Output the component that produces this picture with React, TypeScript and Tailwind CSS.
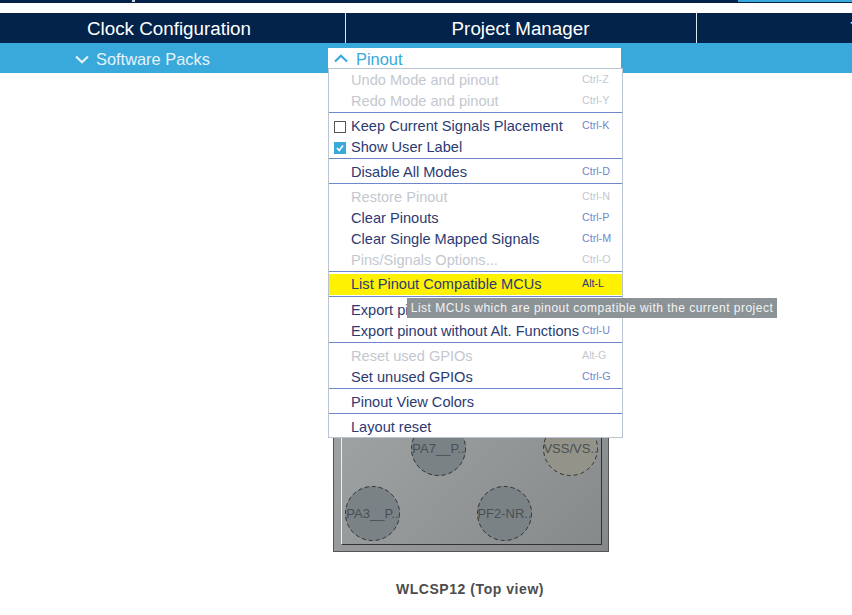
type Item = { label: string; key?: string; off?: boolean; box?: 'empty' | 'checked'; hot?: boolean };

const groups: Item[][] = [
  [
    { label: 'Undo Mode and pinout', key: 'Ctrl-Z', off: true },
    { label: 'Redo Mode and pinout', key: 'Ctrl-Y', off: true },
  ],
  [
    { label: 'Keep Current Signals Placement', key: 'Ctrl-K', box: 'empty' },
    { label: 'Show User Label', box: 'checked' },
  ],
  [{ label: 'Disable All Modes', key: 'Ctrl-D' }],
  [
    { label: 'Restore Pinout', key: 'Ctrl-N', off: true },
    { label: 'Clear Pinouts', key: 'Ctrl-P' },
    { label: 'Clear Single Mapped Signals', key: 'Ctrl-M' },
    { label: 'Pins/Signals Options...', key: 'Ctrl-O', off: true },
  ],
  [{ label: 'List Pinout Compatible MCUs', key: 'Alt-L', hot: true }],
  [
    { label: 'Export pinout with Alt. Functions', key: 'Ctrl-E' },
    { label: 'Export pinout without Alt. Functions', key: 'Ctrl-U' },
  ],
  [
    { label: 'Reset used GPIOs', key: 'Alt-G', off: true },
    { label: 'Set unused GPIOs', key: 'Ctrl-G' },
  ],
  [{ label: 'Pinout View Colors' }],
  [{ label: 'Layout reset' }],
];

function Caret({ up }: { up?: boolean }) {
  return (
    <svg width="14" height="9" viewBox="0 0 14 9" fill="none" stroke="currentColor" strokeWidth="2.2">
      <path d={up ? 'M1 7.5 L7 1.8 L13 7.5' : 'M1 1.5 L7 7.2 L13 1.5'} />
    </svg>
  );
}

function Row({ item }: { item: Item }) {
  return (
    <div className={`flex h-[21px] pl-[5px] ${item.hot ? 'bg-[#fff200]' : ''}`}>
      <div className="flex w-[17px] shrink-0 items-center">
        {item.box === 'empty' && <span className="h-[12px] w-[12px] border border-[#555]" />}
        {item.box === 'checked' && (
          <span className="flex h-[12px] w-[12px] items-center justify-center bg-[#39a9dc]">
            <svg width="10" height="10" viewBox="0 0 10 10" fill="none" stroke="#fff" strokeWidth="1.6">
              <path d="M2 5 L4.2 7.4 L8 2.5" />
            </svg>
          </span>
        )}
      </div>
      <div
        className={`flex w-[231px] shrink-0 items-center text-[14.6px] whitespace-nowrap ${item.hot ? 'pt-[1px]' : ''} ${
          item.off ? 'text-[#c3c8d0]' : 'text-[#2b3a72]'
        }`}
      >
        {item.label}
      </div>
      {item.key && (
        <div className={`pt-[2px] text-[10.7px] leading-[14px] ${item.off ? 'text-[#c3c8d0]' : item.hot ? 'text-[#2b3a72]' : 'text-[#6f88cc]'}`}>
          {item.key}
        </div>
      )}
    </div>
  );
}

function Pin({ name, x, y, tan }: { name: string; x: number; y: number; tan?: boolean }) {
  return (
    <div
      className={`absolute flex h-[55px] w-[55px] items-center justify-center rounded-full text-[13px] whitespace-nowrap text-[#4a4f52] ${
        tan ? 'bg-[#93938a]' : 'bg-[#7b8286]'
      }`}
      style={{ left: x, top: y }}
    >
      <svg width="55" height="55" viewBox="0 0 55 55" fill="none" className="absolute inset-0">
        <circle cx="27.5" cy="27.5" r="27" stroke="#333" strokeDasharray="4 3" />
      </svg>
      {name}
    </div>
  );
}

export default function App() {
  return (
    <div className="relative h-[615px] w-[852px] overflow-hidden bg-white font-['Liberation_Sans',Arial,sans-serif]">
      <div className="flex h-[3px] justify-between bg-[#03234b] pl-[132px]">
        <div className="h-[2px] w-[3px] bg-[#cfd6e0]" />
        <div className="h-[2px] w-[114px] bg-[#39a9dc]" />
      </div>
      <div className="mt-[10px] flex h-[30px] bg-[#03234b] text-[18.8px] text-white">
        <div className="flex w-[346px] shrink-0 items-center justify-center border-r border-[#dfe5ec] pr-[7px] pt-[2px]">Clock Configuration</div>
        <div className="flex w-[351px] shrink-0 items-center justify-center border-r border-[#dfe5ec] pr-[1px] pt-[2px]">Project Manager</div>
        <div className="flex w-[351px] shrink-0 items-center justify-center pt-[2px]">Tools</div>
      </div>
      <div className="flex h-[30px] bg-[#39a9dc] text-[16.4px]">
        <div className="flex w-[328px] shrink-0 items-center gap-[7px] pl-[75px] pt-[2px] text-[#e6f3fa]">
          <Caret />
          <span>Software Packs</span>
        </div>
        <div className="mt-[5px] flex h-[25px] w-[293px] items-start gap-[8px] bg-white pl-[6px] text-[#39a9dc]">
          <span className="pt-[6px]"><Caret up /></span>
          <span className="leading-[23px]">Pinout</span>
        </div>
      </div>

      <div className="relative ml-[333px] mt-[200px] h-[279px] w-[276px] border border-[#555] bg-gradient-to-br from-[#a9adae] to-[#85898a]">
        <div className="absolute bottom-[6px] left-[7px] right-[6px] top-[6px] border-b border-l border-r border-b-[#333] border-l-[#eee] border-r-[#333]" />
        <Pin name="PA7__P.." x={77} y={147} />
        <Pin name="VSS/VS.." x={209} y={147} tan />
        <Pin name="PA3__P.." x={11} y={212} />
        <Pin name="PF2-NR.." x={143} y={212} />
      </div>
      <div className="ml-[-1px] mt-[27px] w-[942px] text-center text-[14px] font-bold tracking-[0.55px] text-[#4d4d4d]">WLCSP12 (Top view)</div>

      {/* menu */}
      <div className="absolute left-[328px] top-[68px] h-[370px] w-[295px] overflow-hidden border border-[#b9c3d1] bg-white">
        {groups.map((g, i) => (
          <div
            key={i}
            className={i === 0 ? 'pt-[1px]' : g[0].hot ? 'border-t border-[#6f88cc] pb-[1px] pt-[2px]' : 'border-t border-[#6f88cc] pt-[3px]'}
          >
            {g.map((item) => (
              <Row key={item.label} item={item} />
            ))}
          </div>
        ))}
      </div>
      <div className="absolute left-[407px] top-[298px] flex h-[20px] w-[370px] items-center justify-center bg-[#8c9396] text-[12px] tracking-[0.49px] whitespace-nowrap text-[#f2f4f5]">
        List MCUs which are pinout compatible with the current project
      </div>
    </div>
  );
}
